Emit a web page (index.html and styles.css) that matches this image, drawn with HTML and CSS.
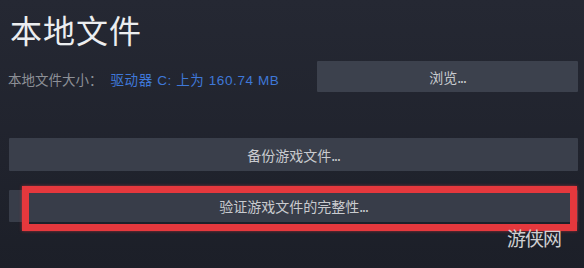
FILE: index.html
```html
<!DOCTYPE html>
<html lang="zh">
<head>
<meta charset="utf-8">
<link rel="stylesheet" href="styles.css">
</head>
<body>
<div class="page">
  <h1 class="title">本地文件</h1>
  <div class="size-row">
    <div class="size-label">本地文件大小：<span class="size-value">驱动器 C: 上为 160.74 MB</span></div>
    <button class="btn btn-browse">浏览<span class="dots">...</span></button>
  </div>
  <button class="btn btn-wide btn-backup">备份游戏文件<span class="dots">...</span></button>
  <div class="verify-wrap">
    <button class="btn btn-wide btn-verify">验证游戏文件的完整性<span class="dots">...</span></button>
    <div class="highlight"></div>
  </div>
  <div class="watermark">游侠网</div>
</div>
</body>
</html>
```

FILE: styles.css
```css
html, body {
  margin: 0;
  padding: 0;
}
body {
  width: 584px;
  height: 268px;
  overflow: hidden;
  background: linear-gradient(180deg, #252833 0%, #20232d 60%, #1c1f28 100%);
  font-family: "Noto Sans CJK SC", "Liberation Sans", sans-serif;
  color: #d6d7da;
}
.page {
  position: relative;
  height: 268px;
  padding: 0 6px 0 9px;
  box-sizing: border-box;
  display: flex;
  flex-direction: column;
}
.title {
  margin: 9px 0 0 1px;
  font-size: 32px;
  line-height: 41px;
  font-weight: 400;
  color: #eceef0;
  letter-spacing: 1px;
}
.size-row {
  display: flex;
  align-items: center;
  justify-content: space-between;
  margin-top: 11px;
}
.size-label {
  font-size: 13.5px;
  color: #8d9097;
  margin-left: -1px;
  margin-top: 4px;
}
.size-value {
  color: #3f78d8;
  margin-left: 8px;
  font-family: "Liberation Sans", "Noto Sans CJK SC", sans-serif;
  letter-spacing: 0.6px;
}
.btn {
  border: none;
  font-family: "Noto Sans CJK SC", "Liberation Sans", sans-serif;
  color: #c9cbcf;
  background: #3b404c;
  font-size: 14px;
  padding: 0;
  border-radius: 1px;
}
.dots {
  letter-spacing: -1px;
}
.btn-browse {
  width: 261px;
  height: 31px;
  background: #3c414d;
}
.btn-wide {
  width: 569px;
  height: 33px;
}
.btn-backup {
  margin-top: 46px;
  background: #3a3f4b;
}
.verify-wrap {
  position: relative;
  margin-top: 19px;
}
.btn-verify {
  height: 32px;
  display: block;
  background: #383d49;
}
.highlight {
  position: absolute;
  left: 13px;
  top: -4px;
  width: 555px;
  height: 45px;
  box-sizing: border-box;
  border: 7px solid #e5383d;
  box-shadow: 0 0 3px rgba(229, 56, 61, 0.6);
}
.watermark {
  position: absolute;
  left: 507px;
  top: 225px;
  font-size: 19px;
  line-height: 26px;
  color: #d0d0d2;
  letter-spacing: -1px;
  font-family: "Noto Sans CJK SC", sans-serif;
}
```
